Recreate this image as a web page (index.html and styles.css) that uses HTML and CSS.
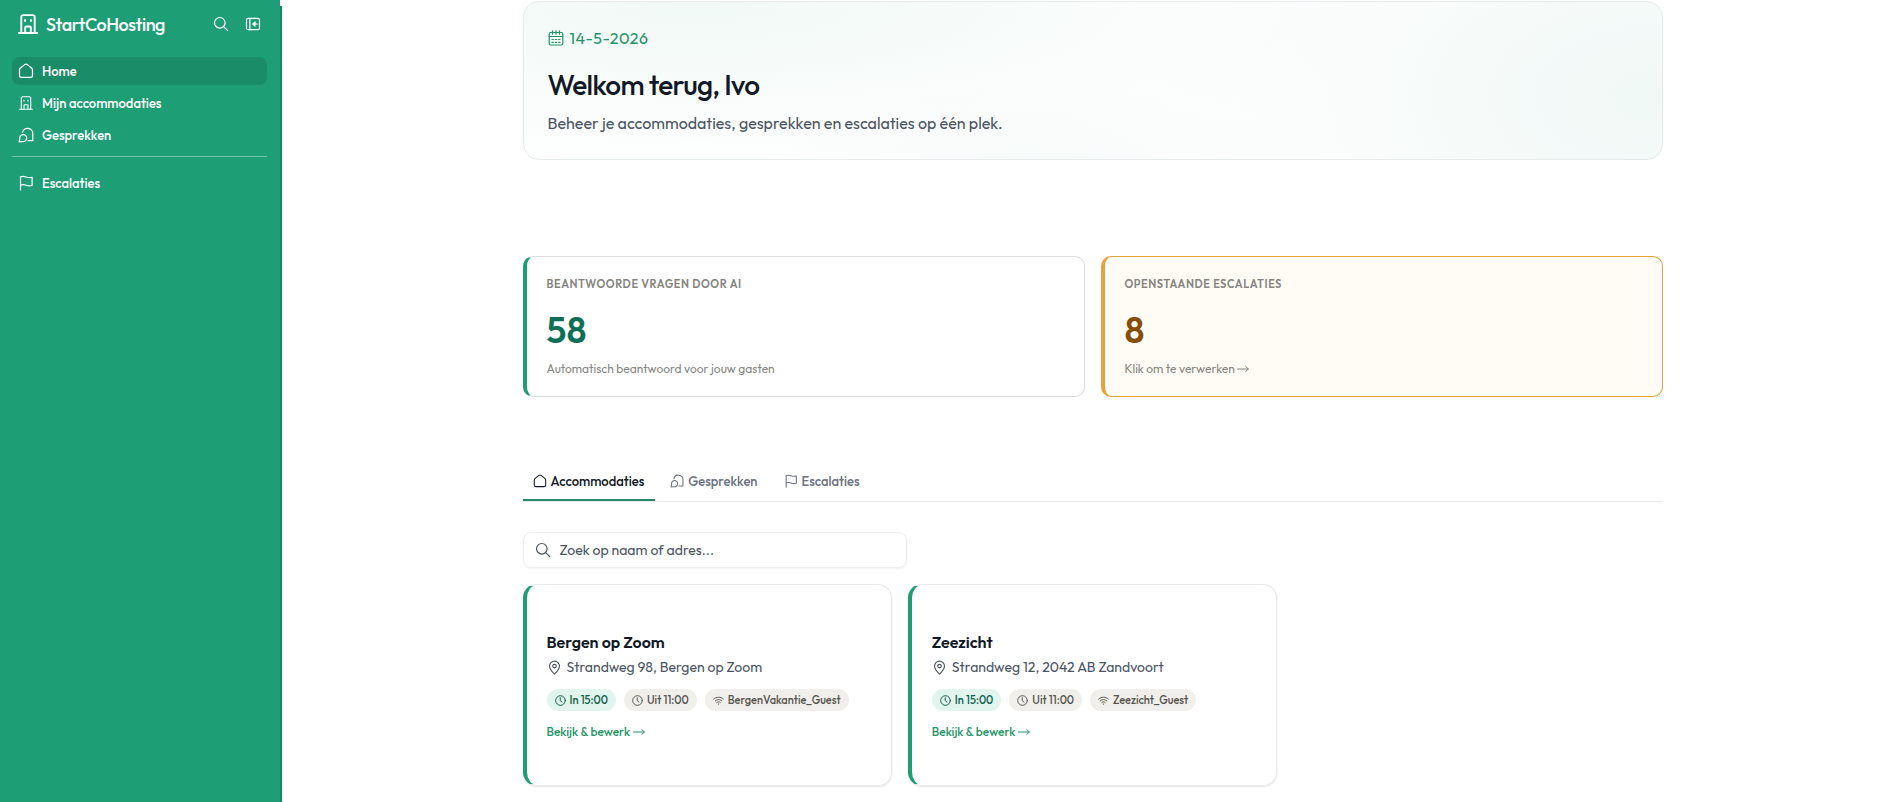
FILE: index.html
```html
<!DOCTYPE html>
<html lang="nl">
<head>
<meta charset="UTF-8">
<meta name="viewport" content="width=device-width, initial-scale=1.0">
<title>StartCoHosting</title>
<link rel="stylesheet" href="styles.css">
</head>
<body>

<!-- Iconen -->
<svg class="sprite" width="0" height="0">
    <symbol id="i-building" viewBox="0 0 20 20"><path d="M3.300 19V3a1.900 1.900 0 0 1 1.900-1.900h9.600A1.900 1.900 0 0 1 16.700 3v16M.9 19h18.200M7.200 19v-5.500a1 1 0 0 1 1-1h3.600a1 1 0 0 1 1 1V19"/><path d="M7.100 6v1M12.900 6v1"/></symbol>
    <symbol id="i-home" viewBox="0 0 16 16"><path d="M1.500 6.900c0-.8.4-1.400 1-1.900L6.700 1.600c.8-.6 1.800-.6 2.600 0L13.500 5c.6.500 1 1.100 1 1.900v5.600c0 1.100-.8 1.900-1.900 1.900H3.400c-1.100 0-1.900-.8-1.900-1.900z"/></symbol>
    <symbol id="i-chat" viewBox="0 0 16 16"><path d="M4.500 5.500a5.200 5.200 0 0 1 10.300 1.100v7.100H10"/><path d="M1.200 14.800l.6-3a3.500 3.500 0 1 1 2.900 2.700z"/></symbol>
    <symbol id="i-flag" viewBox="0 0 16 16"><path d="M2.500 15V1.800c2-.7 3.900-.5 5.600.2 1.900.8 3.700.9 6 .2v8.300c-2.300.7-4.100.6-6-.2-1.700-.7-3.600-.8-5.600-.1"/></symbol>
    <symbol id="i-search" viewBox="0 0 16 16"><circle cx="6.800" cy="6.800" r="5.300"/><path d="M10.700 10.700l4 4"/></symbol>
    <symbol id="i-panel" viewBox="0 0 16 16"><rect x="1.500" y="2.300" width="13" height="11.400" rx="1.800"/><path d="M4.900 2.300v11.400M12.300 8H8M10 5.800L7.800 8l2.200 2.200z"/></symbol>
    <symbol id="i-calendar" viewBox="0 0 16 16"><rect x="1.200" y="2.500" width="13.600" height="12.500" rx="1.500"/><path d="M1.200 6.500h13.600M4.500.8v3.400M8 .8v3.400M11.500.8v3.400M4 9.500h1.400M7.300 9.500h1.400M10.600 9.500H12M4 12.300h1.400M7.300 12.300h1.400M10.600 12.300H12"/></symbol>
    <symbol id="i-pin" viewBox="0 0 16 16"><path d="M8 15C5.300 12.600 2.700 9.800 2.700 6.500a5.300 5.300 0 0 1 10.600 0C13.300 9.800 10.700 12.600 8 15z"/><circle cx="8" cy="6.500" r="1.900"/></symbol>
    <symbol id="i-clock" viewBox="0 0 16 16"><circle cx="8" cy="8" r="7"/><path d="M7.600 4v4.300l2.600 2"/></symbol>
    <symbol id="i-wifi" viewBox="0 0 16 16"><path d="M1 5.800c4-3.500 10-3.500 14 0M3.200 8.500c2.800-2.400 6.800-2.400 9.600 0M5.500 11c1.500-1.200 3.500-1.200 5 0M7.800 13.300h.4"/></symbol>
    <symbol id="i-arrow" viewBox="0 0 12 8"><path d="M.5 4h10.800M8.800 1.600L11.300 4 8.800 6.400"/></symbol>
</svg>

<div class="layout">
    <aside class="sidebar">
        <div class="brand">
            <svg class="brand-icon"><use href="#i-building"/></svg>
            <span class="brand-name">StartCoHosting</span>
            <svg class="icon"><use href="#i-search"/></svg>
            <svg class="icon"><use href="#i-panel"/></svg>
        </div>
        <nav class="menu">
            <a class="menu-item active"><svg class="icon"><use href="#i-home"/></svg><span>Home</span></a>
            <a class="menu-item"><svg class="icon icon-building"><use href="#i-building"/></svg><span>Mijn accommodaties</span></a>
            <a class="menu-item"><svg class="icon"><use href="#i-chat"/></svg><span>Gesprekken</span></a>
        </nav>
        <nav class="menu menu-extra">
            <a class="menu-item"><svg class="icon"><use href="#i-flag"/></svg><span>Escalaties</span></a>
        </nav>
    </aside>

    <main class="content">
        <section class="hero">
            <div class="hero-date"><svg class="icon"><use href="#i-calendar"/></svg><span>14-5-2026</span></div>
            <h1>Welkom terug, Ivo</h1>
            <p>Beheer je accommodaties, gesprekken en escalaties op één plek.</p>
        </section>

        <section class="stats">
            <div class="stat">
                <div class="stat-label">Beantwoorde vragen door AI</div>
                <div class="stat-value">58</div>
                <div class="stat-note">Automatisch beantwoord voor jouw gasten</div>
            </div>
            <div class="stat stat-warning">
                <div class="stat-label">Openstaande escalaties</div>
                <div class="stat-value">8</div>
                <div class="stat-note">Klik om te verwerken <svg class="arrow"><use href="#i-arrow"/></svg></div>
            </div>
        </section>

        <div class="tabs">
            <a class="tab active"><svg class="icon"><use href="#i-home"/></svg><span>Accommodaties</span></a>
            <a class="tab"><svg class="icon"><use href="#i-chat"/></svg><span>Gesprekken</span></a>
            <a class="tab"><svg class="icon"><use href="#i-flag"/></svg><span>Escalaties</span></a>
        </div>

        <div class="search"><svg class="icon"><use href="#i-search"/></svg><span>Zoek op naam of adres...</span></div>

        <section class="cards">
            <article class="card">
                <h2>Bergen op Zoom</h2>
                <div class="address"><svg class="icon"><use href="#i-pin"/></svg><span>Strandweg 98, Bergen op Zoom</span></div>
                <div class="chips">
                    <span class="chip chip-in"><svg class="icon"><use href="#i-clock"/></svg>In 15:00</span>
                    <span class="chip"><svg class="icon"><use href="#i-clock"/></svg>Uit 11:00</span>
                    <span class="chip"><svg class="icon"><use href="#i-wifi"/></svg>BergenVakantie_Guest</span>
                </div>
                <a class="card-link">Bekijk &amp; bewerk <svg class="arrow"><use href="#i-arrow"/></svg></a>
            </article>
            <article class="card">
                <h2>Zeezicht</h2>
                <div class="address"><svg class="icon"><use href="#i-pin"/></svg><span>Strandweg 12, 2042 AB Zandvoort</span></div>
                <div class="chips">
                    <span class="chip chip-in"><svg class="icon"><use href="#i-clock"/></svg>In 15:00</span>
                    <span class="chip"><svg class="icon"><use href="#i-clock"/></svg>Uit 11:00</span>
                    <span class="chip"><svg class="icon"><use href="#i-wifi"/></svg>Zeezicht_Guest</span>
                </div>
                <a class="card-link">Bekijk &amp; bewerk <svg class="arrow"><use href="#i-arrow"/></svg></a>
            </article>
        </section>
    </main>
</div>

</body>
</html>
```
FILE: styles.css
```css
* {
    box-sizing: border-box;
}
body {
    margin: 0;
    font-family: Outfit, Lato, sans-serif;
    font-size: 14px;
    color: #111827;
    background: #fff;
    overflow: hidden;
}
h1, h2, p {
    margin: 0;
}
svg {
    fill: none;
    stroke: currentColor;
    stroke-width: 1.2;
    stroke-linecap: round;
    stroke-linejoin: round;
    flex: none;
}
.sprite {
    position: absolute;
}
.icon {
    width: 16px;
    height: 16px;
}
.arrow {
    width: 12px;
    height: 8px;
    stroke-width: 1;
}
.layout {
    display: flex;
    height: 802px;
}

/* Zijbalk */
.sidebar {
    width: 282px;
    flex: none;
    padding: 0 15px 0 12px;
    color: #fff;
    background: linear-gradient(#fff, #fff) right top / 2px 6px no-repeat,
                linear-gradient(#1a8763, #1a8763) right top / 2px 100% no-repeat,
                #1d9e75;
}
.brand {
    display: flex;
    align-items: center;
    height: 48px;
    padding: 0 6px;
}
.brand-icon {
    width: 20px;
    height: 20px;
    stroke-width: 1.9;
}
.brand-name {
    font-size: 18px;
    font-weight: 500;
    letter-spacing: -.45px;
    margin-left: 8px;
    width: 167px;
}
.brand .icon + .icon {
    margin-left: 16px;
}
.menu {
    display: flex;
    flex-direction: column;
    gap: 4px;
    margin-top: 9px;
}
.menu-item {
    display: flex;
    align-items: center;
    gap: 8px;
    height: 28px;
    padding: 0 6px;
    border-radius: 8px;
    font-size: 13px;
    font-weight: 500;
}
.menu-item.active {
    background: #1a8d68;
}
.icon-building {
    width: 14px;
    height: 14px;
    margin: 0 1px;
    stroke-width: 1.6;
}
.menu-extra {
    border-top: 1px solid #75c4aa;
    margin-top: 7px;
    padding-top: 12px;
}

/* Inhoud */
.content {
    width: 1140px;
    margin-left: 240.5px;
    padding-top: 1px;
}
.hero {
    height: 159px;
    padding: 23px 24px;
    border: 1px solid #e5eceb;
    border-radius: 16px;
    background: radial-gradient(65% 110% at 15% 0, #f1f9f6, rgba(255, 255, 255, 0)),
                radial-gradient(46% 190% at 100% 60%, #f0f8f6, rgba(255, 255, 255, 0)),
                radial-gradient(24% 60% at 45% 110%, #f5faf9, rgba(255, 255, 255, 0)),
                #fff;
}
.hero-date {
    display: flex;
    align-items: center;
    gap: 6px;
    height: 26px;
    font-size: 16px;
    letter-spacing: .45px;
    color: #1f9568;
}
.hero h1 {
    margin-top: 16px;
    font-size: 28px;
    line-height: 36px;
    font-weight: 500;
    letter-spacing: -.7px;
}
.hero p {
    margin-top: 8px;
    font-size: 16px;
    line-height: 24px;
    font-weight: 400;
    color: #4b5563;
}
.stats {
    display: grid;
    grid-template-columns: 1fr 1fr;
    gap: 16px;
    margin-top: 96px;
}
.stat {
    height: 141px;
    padding: 19px 20px;
    border: 1px solid #dcdfdd;
    border-left: 4px solid #1d9e75;
    border-radius: 10px;
    color: #85847e;
}
.stat-label {
    font-size: 11px;
    line-height: 16px;
    font-weight: 600;
    text-transform: uppercase;
    letter-spacing: .55px;
}
.stat-value {
    margin-top: 16px;
    font-size: 36px;
    line-height: 44px;
    font-weight: 600;
    color: #0f6e56;
}
.stat-note {
    margin-top: 8px;
    font-size: 12px;
    line-height: 18px;
}
.stat-warning {
    border-color: #e8a33c;
    background: #fffcf5;
}
.stat-warning .stat-value {
    color: #854f0b;
}
.tabs {
    display: flex;
    gap: 5px;
    height: 42px;
    margin-top: 63px;
    border-bottom: 1px solid #e9eaec;
    color: #6b7280;
    font-size: 13px;
    font-weight: 500;
}
.tab {
    display: flex;
    align-items: center;
    gap: 4px;
    height: 41px;
    padding: 2px 11px 0 10px;
    border-bottom: 2px solid transparent;
}
.tab .icon {
    width: 14px;
    height: 14px;
}
.tab.active {
    color: #111827;
    border-color: #26896a;
}
.search {
    display: flex;
    align-items: center;
    gap: 9px;
    width: 384px;
    height: 36px;
    margin-top: 30px;
    padding: 0 11px;
    border: 1px solid #eeeff0;
    border-radius: 8px;
    box-shadow: 0 1px 2px rgba(0, 0, 0, .05);
    color: #4b5563;
}
.cards {
    display: grid;
    grid-template-columns: repeat(3, 1fr);
    gap: 16px;
    margin-top: 16px;
}
.card {
    height: 202px;
    padding: 45px 20px 0;
    border: 1px solid #e9eaea;
    border-left: 4px solid #1d9e75;
    border-radius: 14px;
    box-shadow: 0 1px 2px rgba(0, 0, 0, .12);
}
.card h2 {
    font-size: 16px;
    line-height: 24px;
    font-weight: 600;
}
.address {
    display: flex;
    align-items: center;
    gap: 5px;
    height: 26px;
    color: #4b5563;
}
.address .icon {
    width: 15px;
    height: 15px;
}
.chips {
    display: flex;
    gap: 8px;
    margin-top: 9px;
}
.chip {
    display: flex;
    align-items: center;
    gap: 4px;
    height: 22px;
    padding: 0 8px;
    border-radius: 11px;
    background: #f1efeb;
    color: #55544f;
    font-size: 11px;
    font-weight: 500;
}
.chip .icon {
    width: 11px;
    height: 11px;
    stroke-width: 1.4;
}
.chip-in {
    background: #e1f5ee;
    color: #0f5f4b;
}
.card-link {
    display: block;
    margin-top: 12px;
    font-size: 12px;
    line-height: 18px;
    font-weight: 500;
    color: #1f9568;
}
```
